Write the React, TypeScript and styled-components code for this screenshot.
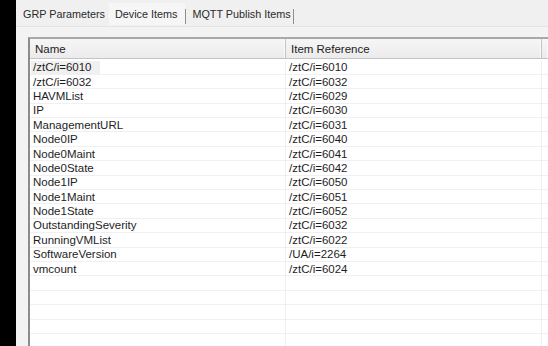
import styled, { createGlobalStyle } from "styled-components"

const items: [string, string][] = [
  ["/ztC/i=6010", "/ztC/i=6010"],
  ["/ztC/i=6032", "/ztC/i=6032"],
  ["HAVMList", "/ztC/i=6029"],
  ["IP", "/ztC/i=6030"],
  ["ManagementURL", "/ztC/i=6031"],
  ["Node0IP", "/ztC/i=6040"],
  ["Node0Maint", "/ztC/i=6041"],
  ["Node0State", "/ztC/i=6042"],
  ["Node1IP", "/ztC/i=6050"],
  ["Node1Maint", "/ztC/i=6051"],
  ["Node1State", "/ztC/i=6052"],
  ["OutstandingSeverity", "/ztC/i=6032"],
  ["RunningVMList", "/ztC/i=6022"],
  ["SoftwareVersion", "/UA/i=2264"],
  ["vmcount", "/ztC/i=6024"],
]

export default function App() {
  return <>
    <Global />
    <Screen>
      <Edge />
      <Panel>
        <TabBar>
          <Tab $pl={7} $pr={4}>GRP Parameters</Tab>
          <Tab $active $pl={6} $pr={8}>Device Items</Tab>
          <Divider />
          <Tab $pl={6} $pr={2}>MQTT Publish Items</Tab>
          <Divider />
        </TabBar>
        <Content>
          <ListBox>
            <Header>
              <HeadCell>Name</HeadCell>
              <HeadCell>Item Reference</HeadCell>
              <HeadCell />
            </Header>
            <Body>
              {items.map(([name, ref], i) => (
                <Row key={i}>
                  <Cell><Label $focused={i === 0}>{name}</Label></Cell>
                  <Cell><Label>{ref}</Label></Cell>
                  <Cell />
                </Row>
              ))}
              {Array.from({ length: 6 }).map((_, i) => (
                <Row key={'e' + i}>
                  <Cell />
                  <Cell />
                  <Cell />
                </Row>
              ))}
            </Body>
          </ListBox>
        </Content>
      </Panel>
    </Screen>
  </>
}

const Global = createGlobalStyle`
  html, body {
    margin: 0;
    padding: 0;
    background: #000;
    overflow: hidden;
  }
  body {
    font-family: "Liberation Sans", Arial, sans-serif;
  }
`

const Screen = styled.div`
  width: 548px;
  height: 346px;
  display: flex;
  overflow: hidden;
`

const Edge = styled.div`
  width: 16px;
  flex-shrink: 0;
  background: #000;
`

const Panel = styled.div`
  flex: 1;
  display: flex;
  flex-direction: column;
  background: #f0f0f0;
  min-width: 0;
`

const TabBar = styled.div`
  height: 27px;
  display: flex;
  align-items: flex-end;
  border-bottom: 1px solid #e4e4e4;
  box-sizing: border-box;
`

const Tab = styled.div<{ $active?: boolean; $pl: number; $pr: number }>`
  height: 22px;
  display: flex;
  align-items: center;
  padding: 0 ${p => p.$pr}px 1px ${p => p.$pl}px;
  box-sizing: border-box;
  font-size: 10.8px;
  color: #2a2a2a;
  white-space: nowrap;
  background: ${p => p.$active ? '#f6f6f6' : 'transparent'};
  margin-bottom: 1px;
`

const Divider = styled.div`
  width: 1px;
  height: 15px;
  margin-bottom: 2px;
  background: #8e8e8e;
`

const Content = styled.div`
  flex: 1;
  padding: 10px 0 0 12px;
  background: #f3f3f3;
  min-height: 0;
`

const ListBox = styled.div`
  height: 100%;
  background: #fff;
  border-left: 2px solid #8c8c8c;
  border-top: 2px solid #a8a8a8;
  box-sizing: border-box;
  overflow: hidden;
`

const Header = styled.div`
  height: 19px;
  display: grid;
  grid-template-columns: 256px 256px 1fr;
  background: linear-gradient(#f6f6f6, #ebebeb);
  border-bottom: 1px solid #c4c4c4;
`

const HeadCell = styled.div`
  display: flex;
  align-items: center;
  padding-left: 5px;
  font-size: 11.5px;
  color: #222;
  border-right: 1px solid #c4c4c4;
  box-shadow: inset -1px 0 0 #fafafa;

  &:last-child {
    border-right: none;
  }
`

const Body = styled.div`
  padding-top: 1.5px;
`

const Row = styled.div`
  height: 14.4px;
  display: grid;
  grid-template-columns: 256px 256px 1fr;
  box-shadow: inset 0 -1px 0 #f0f0f0;
`

const Cell = styled.div`
  display: flex;
  align-items: center;
  padding-left: 1px;
  border-right: 1px solid #f0f0f0;
  overflow: hidden;
  white-space: nowrap;

  &:last-child {
    border-right: none;
  }
`

const Label = styled.span<{ $focused?: boolean }>`
  font-size: 11.5px;
  line-height: 13px;
  color: #1e1e1e;
  padding: 0 ${p => p.$focused ? 8 : 2}px 0 2px;
  background: ${p => p.$focused ? '#f0f0f0' : 'transparent'};
`
